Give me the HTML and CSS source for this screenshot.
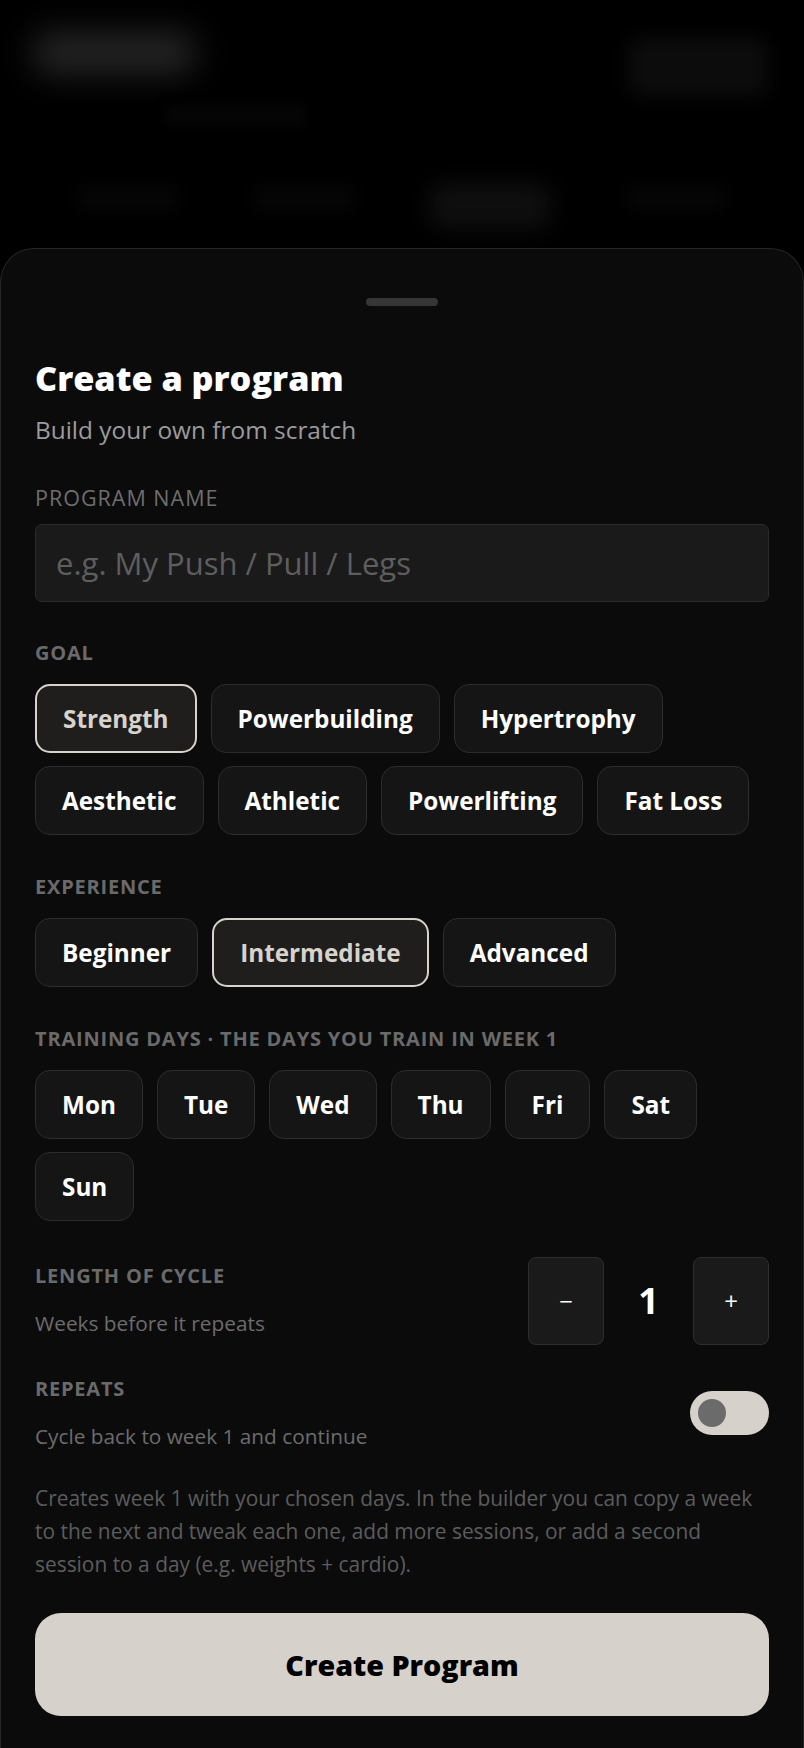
FILE: index.html
```html
<!DOCTYPE html>
<html lang="en">
<head>
<meta charset="utf-8">
<title>Create a program</title>
<link rel="stylesheet" href="styles.css">
</head>
<body>
<div class="backdrop" aria-hidden="true">
  <div class="bd-top">
    <div class="bd-logo"></div>
    <div class="bd-pill"></div>
  </div>
  <div class="bd-sub"></div>
  <div class="bd-tabs">
    <div class="bd-tab"></div>
    <div class="bd-tab"></div>
    <div class="bd-tab bd-tab-on"></div>
    <div class="bd-tab"></div>
  </div>
</div>

<section class="sheet">
  <div class="handle"></div>
  <h1 class="title">Create a program</h1>
  <p class="subtitle">Build your own from scratch</p>

  <label class="field-label" for="pname">PROGRAM NAME</label>
  <input id="pname" class="text-input" type="text" placeholder="e.g. My Push / Pull / Legs">

  <div class="section-label sec-goal">GOAL</div>
  <div class="chips">
    <button class="chip chip-on">Strength</button>
    <button class="chip">Powerbuilding</button>
    <button class="chip">Hypertrophy</button>
    <button class="chip">Aesthetic</button>
    <button class="chip">Athletic</button>
    <button class="chip">Powerlifting</button>
    <button class="chip">Fat Loss</button>
  </div>

  <div class="section-label">EXPERIENCE</div>
  <div class="chips">
    <button class="chip">Beginner</button>
    <button class="chip chip-on">Intermediate</button>
    <button class="chip">Advanced</button>
  </div>

  <div class="section-label">TRAINING DAYS · THE DAYS YOU TRAIN IN WEEK 1</div>
  <div class="chips">
    <button class="chip">Mon</button>
    <button class="chip">Tue</button>
    <button class="chip">Wed</button>
    <button class="chip">Thu</button>
    <button class="chip">Fri</button>
    <button class="chip">Sat</button>
    <button class="chip">Sun</button>
  </div>

  <div class="setting-row row-cycle">
    <div class="setting-text">
      <div class="setting-label">LENGTH OF CYCLE</div>
      <div class="setting-desc">Weeks before it repeats</div>
    </div>
    <div class="stepper">
      <button class="step-btn">&minus;</button>
      <span class="step-val">1</span>
      <button class="step-btn">+</button>
    </div>
  </div>

  <div class="setting-row row-repeat">
    <div class="setting-text">
      <div class="setting-label">REPEATS</div>
      <div class="setting-desc">Cycle back to week 1 and continue</div>
    </div>
    <div class="toggle"><span class="knob"></span></div>
  </div>

  <p class="note">Creates week 1 with your chosen days. In the builder you can copy a week to the next and tweak each one, add more sessions, or add a second session to a day (e.g. weights + cardio).</p>

  <button class="primary">Create Program</button>
</section>
</body>
</html>
```
FILE: styles.css
```css
* { box-sizing: border-box; }
html, body { margin: 0; padding: 0; }
body {
  background: #000;
  font-family: "Open Sans", "Noto Sans", sans-serif;
  color: #fff;
  width: 804px;
  height: 1748px;
  overflow: hidden;
}

/* blurred page behind the sheet */
.backdrop {
  height: 248px;
  overflow: hidden;
}
.bd-top {
  display: flex;
  justify-content: space-between;
  padding: 32px 36px 0 34px;
}
.bd-logo {
  width: 160px;
  height: 42px;
  background: #242424;
  border-radius: 10px;
  filter: blur(16px);
}
.bd-pill {
  width: 140px;
  height: 58px;
  margin-top: 6px;
  background: #0c0c0c;
  border-radius: 14px;
  filter: blur(9px);
}
.bd-sub {
  width: 140px;
  height: 22px;
  margin: 8px 0 0 165px;
  background: #050505;
  filter: blur(5px);
}
.bd-tabs {
  display: flex;
  justify-content: space-around;
  padding: 58px 40px 0 40px;
}
.bd-tab {
  width: 100px;
  height: 28px;
  background: #050505;
  filter: blur(7px);
}
.bd-tab-on {
  width: 120px;
  height: 44px;
  background: #0f0f0f;
  border-radius: 10px;
  filter: blur(11px);
}

/* sheet */
.sheet {
  background: #0b0b0b;
  border: 1px solid #262626;
  border-bottom: none;
  border-radius: 34px 34px 0 0;
  height: 1500px;
  padding: 49px 34px 32px 34px;
  display: flex;
  flex-direction: column;
}
.handle {
  width: 72px;
  height: 8px;
  border-radius: 4px;
  background: #363636;
  align-self: center;
  flex: none;
}
.title {
  margin: 52px 0 0 0;
  font-size: 34.2px;
  line-height: 40px;
  font-weight: 800;
  color: #fff;
}
.subtitle {
  margin: 17px 0 0 0;
  font-size: 24.4px;
  line-height: 30px;
  color: #9b9b9b;
}
.field-label {
  display: block;
  margin-top: 40px;
  font-size: 21.5px;
  line-height: 26px;
  letter-spacing: 1px;
  color: #6e6e6e;
}
.text-input {
  margin-top: 13px;
  height: 78px;
  width: 100%;
  background: #1a1a1a;
  border: 1.5px solid #2b2b2b;
  border-radius: 7px;
  padding: 0 20px;
  font-family: inherit;
  font-size: 31px;
  color: #fff;
  outline: none;
}
.text-input::placeholder { color: #5e5e5e; }

.section-label {
  margin-top: 40px;
  font-size: 20px;
  line-height: 24px;
  font-weight: 700;
  letter-spacing: 0.8px;
  color: #6a6a6a;
}
.sec-goal { margin-top: 39px; }
.chips {
  margin-top: 19px;
  display: flex;
  flex-wrap: wrap;
  gap: 13px 14px;
}
.chip {
  height: 69px;
  padding: 0 26px;
  background: #151515;
  border: 1.5px solid #2c2c2c;
  border-radius: 15px;
  font-family: inherit;
  font-size: 24.3px;
  font-weight: 700;
  color: #fff;
}
.chip-on {
  background: #1f1e1c;
  border: 2px solid #d7d2cb;
  color: #d7d3cc;
}

.setting-row {
  display: flex;
  align-items: center;
  justify-content: space-between;
}
.row-cycle { margin-top: 36px; }
.row-repeat { margin-top: 32px; }
.setting-label {
  font-size: 20px;
  line-height: 24px;
  font-weight: 700;
  letter-spacing: 0.8px;
  color: #6a6a6a;
}
.setting-desc {
  margin-top: 21px;
  font-size: 20.8px;
  line-height: 28px;
  color: #6c6c6c;
}
.stepper {
  display: flex;
  align-items: center;
}
.step-btn {
  width: 76px;
  height: 88px;
  background: #1a1a1a;
  border: 1.5px solid #2e2e2e;
  border-radius: 8px;
  font-family: inherit;
  font-size: 24px;
  color: #fff;
}
.step-val {
  width: 57px;
  margin: 0 16px;
  text-align: center;
  font-size: 36px;
  font-weight: 700;
  color: #fff;
}
.toggle {
  width: 79px;
  height: 44px;
  border-radius: 22px;
  background: #d6d1cb;
  display: flex;
  align-items: center;
  padding-left: 8px;
}
.knob {
  width: 28px;
  height: 28px;
  border-radius: 50%;
  background: #6b6b6b;
}
.note {
  margin: 32px 0 0 0;
  font-size: 20.9px;
  line-height: 33px;
  color: #5c5c5c;
}
.primary {
  margin-top: 32px;
  height: 104px;
  width: 100%;
  border: none;
  border-radius: 26px;
  background: #d6d1cb;
  font-family: inherit;
  font-size: 28.7px;
  font-weight: 800;
  color: #000;
}
```
